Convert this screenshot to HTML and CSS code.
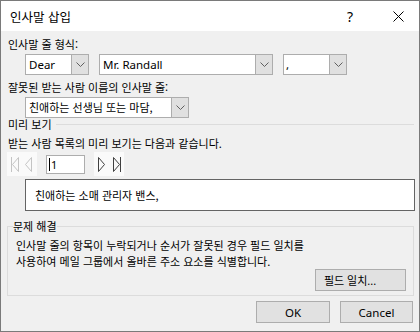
FILE: index.html
```html
<!DOCTYPE html>
<html lang="ko">
<head>
<meta charset="utf-8">
<link rel="stylesheet" href="styles.css">
</head>
<body>
<div class="win">
  <div class="titlebar">
    <span class="title">인사말 삽입</span>
    <span class="help">?</span>
    <svg class="close" width="11" height="11" viewBox="0 0 11 11"><path d="M0.5 0.5L10.5 10.5M10.5 0.5L0.5 10.5" stroke="#000" stroke-width="1"/></svg>
  </div>
  <div class="content">
    <div class="label l1">인사말 줄 형식:</div>
    <div class="combos">
      <div class="combo w-dear"><span class="val">Dear</span><span class="btn"><svg width="9" height="5" viewBox="0 0 9 5"><path d="M0.5 0.5L4.5 4.5L8.5 0.5" fill="none" stroke="#606060"/></svg></span></div>
      <div class="combo w-name"><span class="val">Mr. Randall</span><span class="btn"><svg width="9" height="5" viewBox="0 0 9 5"><path d="M0.5 0.5L4.5 4.5L8.5 0.5" fill="none" stroke="#606060"/></svg></span></div>
      <div class="combo w-punct"><span class="val comma">,</span><span class="btn"><svg width="9" height="5" viewBox="0 0 9 5"><path d="M0.5 0.5L4.5 4.5L8.5 0.5" fill="none" stroke="#606060"/></svg></span></div>
    </div>
    <div class="label l2">잘못된 받는 사람 이름의 인사말 줄:</div>
    <div class="combo w-invalid"><span class="val kr">친애하는 선생님 또는 마담,</span><span class="btn"><svg width="9" height="5" viewBox="0 0 9 5"><path d="M0.5 0.5L4.5 4.5L8.5 0.5" fill="none" stroke="#606060"/></svg></span></div>
    <div class="grouphead"><span>미리 보기</span><span class="gline"></span></div>
    <div class="label l3">받는 사람 목록의 미리 보기는 다음과 같습니다.</div>
    <div class="nav">
      <div class="navbtns">
        <svg width="30" height="24" viewBox="0 0 30 24"><path d="M4.5 5V20M11.5 5.5L5.5 12.5L11.5 19.5Z M24.5 5.5L18.5 12.5L24.5 19.5Z" fill="none" stroke="#c4c4c4"/></svg>
      </div>
      <div class="recinput"><span class="caret"></span>1</div>
      <div class="navbtns">
        <svg width="30" height="24" viewBox="0 0 30 24"><path d="M4.5 5.5L10.5 12.5L4.5 19.5Z M19.5 5.5L25.5 12.5L19.5 19.5Z M26.5 5V20" fill="none" stroke="#404040"/></svg>
      </div>
    </div>
    <div class="preview">친애하는 소매 관리자 밴스,</div>
    <fieldset class="trouble">
      <legend>문제 해결</legend>
      <p class="desc">인사말 줄의 항목이 누락되거나 순서가 잘못된 경우 필드 일치를<br>사용하여 메일 그룹에서 올바른 주소 요소를 식별합니다.</p>
      <div class="matchrow"><button class="pbtn match">필드 일치...</button></div>
    </fieldset>
    <div class="footer">
      <button class="pbtn ok">OK</button>
      <button class="pbtn cancel">Cancel</button>
    </div>
  </div>
</div>
</body>
</html>
```

FILE: styles.css
```css
html, body {
  margin: 0;
  padding: 0;
}
body {
  font-family: "Noto Sans", "Noto Sans CJK KR", sans-serif;
  font-size: 11px;
  color: #000;
}
.win {
  width: 420px;
  height: 332px;
  box-sizing: border-box;
  border: 1px solid #7a7a7a;
  background: #f0f0f0;
  display: flex;
  flex-direction: column;
  overflow: hidden;
}
.titlebar {
  height: 30px;
  flex: none;
  background: #fff;
  display: flex;
  align-items: center;
  padding-left: 9px;
}
.title {
  font-family: "Noto Sans CJK KR", sans-serif;
  font-size: 12.5px;
  flex: 1;
}
.help {
  font-family: "Noto Sans", sans-serif;
  font-size: 14px;
  width: 10px;
  margin-right: 36px;
  color: #000;
}
.close {
  margin-right: 15px;
}
.content {
  padding: 0 5px 0 7px;
  display: flex;
  flex-direction: column;
  align-items: flex-start;
}
.label {
  font-family: "Noto Sans CJK KR", sans-serif;
  font-size: 11px;
  height: 14px;
  line-height: 14px;
}
.l1 { margin-top: 6px; }
.l2 { margin-top: 5px; }
.l3 { margin-top: 5px; }
.combos {
  display: flex;
  gap: 10px;
  margin-top: 3px;
  margin-left: 17px;
}
.combo {
  height: 21px;
  box-sizing: border-box;
  border: 1px solid #adadad;
  background: #fff;
  display: flex;
  align-items: stretch;
}
.combo .val {
  flex: 1;
  padding-left: 3px;
  line-height: 19px;
  font-size: 11.5px;
  white-space: nowrap;
  overflow: hidden;
}
.combo .val.kr {
  font-family: "Noto Sans CJK KR", sans-serif;
  font-size: 11px;
}
.combo .val.comma {
  padding-left: 2px;
}
.combo .btn {
  width: 16px;
  flex: none;
  background: #e0e0e0;
  border-left: 1px solid #adadad;
  display: flex;
  align-items: center;
  justify-content: center;
}
.w-dear { width: 64px; }
.w-name { width: 174px; }
.w-punct { width: 64px; }
.w-invalid {
  width: 164px;
  margin-left: 17px;
  margin-top: 3px;
}
.grouphead {
  align-self: stretch;
  display: flex;
  align-items: center;
  height: 13px;
  font-family: "Noto Sans CJK KR", sans-serif;
  font-size: 11px;
  line-height: 13px;
}
.gline {
  flex: 1;
  border-top: 1px solid #dcdcdc;
  margin-left: 4px;
}
.nav {
  display: flex;
  align-items: center;
  gap: 9px;
  margin-top: 2px;
  margin-left: -1px;
  height: 24px;
}
.navbtns {
  width: 30px;
  height: 24px;
  background: #fafafa;
}
.navbtns svg { display: block; }
.recinput {
  width: 39px;
  height: 19px;
  box-sizing: border-box;
  border: 1px solid #adadad;
  background: #fff;
  font-size: 11px;
  line-height: 17px;
  padding-left: 2px;
  display: flex;
  align-items: center;
}
.caret {
  width: 1px;
  height: 13px;
  background: #000;
  margin-right: 1px;
}
.preview {
  margin-top: 3px;
  margin-left: 17px;
  width: 390px;
  height: 32px;
  box-sizing: border-box;
  border: 1px solid #646464;
  background: #fff;
  font-family: "Noto Sans CJK KR", sans-serif;
  font-size: 11px;
  line-height: 30px;
  padding-left: 9px;
}
.trouble {
  margin: 8px 0 0 -1px;
  width: 407px;
  box-sizing: border-box;
  border: 1px solid #dcdcdc;
  padding: 4px 7px 4px 5px;
  min-inline-size: 0;
}
.trouble legend {
  padding: 0;
  font-family: "Noto Sans CJK KR", sans-serif;
  font-size: 11px;
  line-height: 14px;
  height: 14px;
}
.desc {
  margin: 0 0 0 3px;
  font-family: "Noto Sans CJK KR", sans-serif;
  font-size: 11px;
  line-height: 16px;
}
.matchrow {
  display: flex;
  justify-content: flex-end;
}
.pbtn {
  height: 22px;
  box-sizing: border-box;
  border: 1px solid #adadad;
  background: #e1e1e1;
  font-family: "Noto Sans", "Noto Sans CJK KR", sans-serif;
  font-size: 11.5px;
  color: #000;
  padding: 0;
  margin: 0;
}
.match {
  width: 91px;
  font-size: 11px;
  text-align: left;
  padding-left: 8px;
}
.footer {
  align-self: stretch;
  display: flex;
  justify-content: flex-end;
  gap: 10px;
  margin-top: 5px;
  padding-right: 1px;
}
.ok { width: 74px; }
.cancel { width: 73px; }
```
